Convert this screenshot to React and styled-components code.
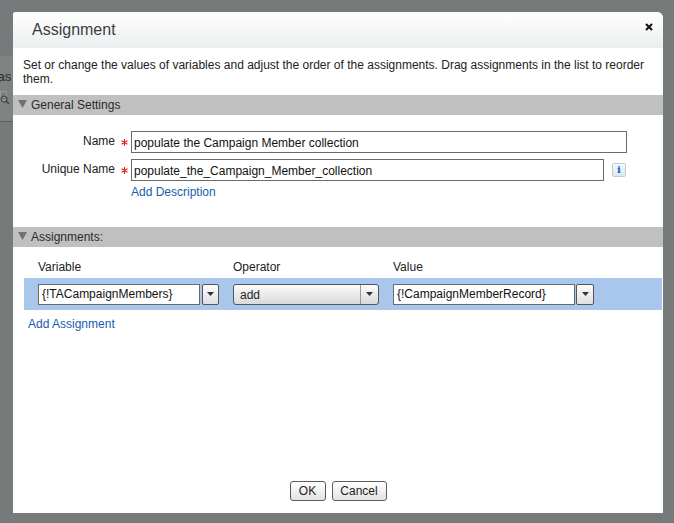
import React from 'react';
import styled, { createGlobalStyle } from 'styled-components';

const Global = createGlobalStyle`
  html, body { margin: 0; padding: 0; background: #777a7a; }
  body { font-family: "Liberation Sans", Arial, sans-serif; font-size: 12px; color: #222; }
`;
const Backdrop = styled.div`
  position: relative; width: 674px; height: 523px; box-sizing: border-box;
  padding: 12px 11px 10px 13px; overflow: hidden; background: #777a7a;
`;
const BehindPanel = styled.div`
  position: absolute; left: 0; top: 56px; width: 13px; height: 66px; box-sizing: border-box;
  border-bottom: 1px solid #5f6262; background: #7f8282; color: #2c2e2e; font-size: 13px;
  overflow: hidden;
`;
const BehindText = styled.div` position: absolute; left: -9px; top: 13px; `;
const BehindIcon = styled.svg` position: absolute; left: 0; top: 35px; `;
const Modal = styled.div`
  position: relative; display: flex; flex-direction: column; height: 501px; background: #fff;
  border-radius: 3px 6px 0 0; overflow: hidden;
`;
const Header = styled.div`
  display: flex; align-items: center; justify-content: space-between; height: 36px; box-sizing: border-box;
  padding: 0 10px 0 19px; background: linear-gradient(#fff, #ebeeef); flex: none;
`;
const Title = styled.div` font-size: 16px; color: #3c3d3e; `;
const Close = styled.svg` margin-top: -7px; `;
const Intro = styled.p`
  margin: 0; padding: 10px 10px 0 10px; height: 47px; box-sizing: border-box;
  font-size: 12px; line-height: 14px; color: #222;
`;
const SectionBar = styled.div`
  display: flex; align-items: center; gap: 4px; height: 20px; flex: none; background: #c0c0c0;
  padding-left: 5px; font-size: 12px; color: #2b2b2b;
`;
const Tri = styled.svg` margin-top: -2px; `;
const Settings = styled.div`
  display: grid; grid-template-columns: 102px 16px auto; grid-auto-rows: min-content; height: 112px;
  box-sizing: border-box; padding-top: 16px; row-gap: 6px; flex: none;
`;
const Label = styled.div` text-align: right; font-size: 12px; line-height: 20px; color: #222; `;
const Star = styled.svg` display: block; margin: 8px 0 0 6px; `;
const FieldRow = styled.div` display: flex; align-items: center; `;
const TextBox = styled.div`
  box-sizing: border-box; width: ${p => p.$w}px; height: 21px; border: 1px solid #6a6a6a;
  background: #fff; font-size: 12px; line-height: 19px; padding-left: 3px; color: #111; white-space: nowrap;
`;
const FieldBox = styled(TextBox)`
  height: 22px; line-height: 20px; padding: 1px 0 0 2px;
`;
const InfoBtn = styled.div`
  box-sizing: border-box; width: 14px; height: 14px; margin-left: 8px; border: 1px solid #c3cdd4; border-radius: 2px;
  background: linear-gradient(#f5f9fc, #dfe8f0); color: #0a63c4; font: bold 10px/12px "DejaVu Serif", serif; text-align: center;
`;
const DescLink = styled.a`
  grid-column: 3; color: #1a5dab; font-size: 12px; line-height: 14px; margin-top: -2px; text-decoration: none;
`;
const AssignArea = styled.div` display: flex; flex-direction: column; flex: 1; padding: 13px 1px 0 11px; `;
const ColHead = styled.div`
  display: grid; grid-template-columns: 195px 160px auto; padding-left: 14px; font-size: 12px; line-height: 15px; color: #222;
  margin-bottom: 3px;
`;
const Row = styled.div`
  display: grid; grid-template-columns: 195px 160px auto; align-items: center; height: 32px; padding-left: 14px;
  background: #a9c6ed; box-sizing: border-box;
`;
const Combo = styled.div` display: flex; align-items: center; gap: ${p => p.$gap}px; `;
const DropBtn = styled.div`
  display: flex; align-items: center; justify-content: center; box-sizing: border-box; width: ${p => p.$w}px; height: 21px;
  border: 1px solid #555; border-radius: 2px; background: linear-gradient(#fbfbfb, #dfe0e2);
`;
const Caret = styled.svg` display: block; `;
const SelectBox = styled.div`
  display: flex; width: 146px; height: 21px; box-sizing: border-box; border: 1px solid #555; border-radius: 3px;
  background: linear-gradient(#fbfbfb, #d9dadc); font-size: 12px; line-height: 20px; color: #222;
`;
const SelectValue = styled.div` flex: 1; padding-left: 6px; border-right: 1px solid #9a9a9a; `;
const SelectArrow = styled.div` display: flex; align-items: center; justify-content: center; width: 17px; `;
const AddLink = styled.a`
  color: #1a5dab; font-size: 12px; line-height: 15px; margin-top: 7px; padding-left: 4px; text-decoration: none;
`;
const Footer = styled.div`
  display: flex; justify-content: center; gap: 6px; padding: 0 10px 12px 0; margin-top: auto;
`;
const Btn = styled.button`
  box-sizing: border-box; height: 20px; width: ${p => p.$w}px; padding: 0; border: 1px solid #5c5c5c; border-radius: 3px;
  background: linear-gradient(#fff, #e2e3e5); font-family: "Liberation Sans", Arial, sans-serif; font-size: 12px; color: #222;
`;

const CaretIcon = () => (
  <Caret width="9" height="5" viewBox="0 0 9 5"><path d="M1 0h7L4.500 4z" fill="#333" /></Caret>
);
const StarIcon = () => (
  <Star width="7" height="7" viewBox="0 0 7 7"><path d="M3.500 0v7M0.500 1.700l6 3.600M6.500 1.700l-6 3.600" stroke="#e0201c" strokeWidth="1.100" /></Star>
);
const TriIcon = () => (
  <Tri width="9" height="8" viewBox="0 0 9 8"><path d="M0 0h9L4.500 8z" fill="#6d7373" /></Tri>
);

export default function App() {
  return (
    <>
      <Global />
      <Backdrop>
        <BehindPanel>
          <BehindText>Tas</BehindText>
          <BehindIcon width="13" height="16" viewBox="0 0 13 16" fill="none">
            <rect x="0.500" y="0.500" width="6" height="9" stroke="#9a9c9c" />
            <circle cx="4" cy="8" r="3" stroke="#444" strokeWidth="1.200" />
            <path d="M6 10l3 3" stroke="#444" strokeWidth="1.500" />
          </BehindIcon>
        </BehindPanel>
        <Modal>
          <Header>
            <Title>Assignment</Title>
            <Close width="8" height="8" viewBox="0 0 8 8"><path d="M1 1l6 6M7 1L1 7" stroke="#111" strokeWidth="2" /></Close>
          </Header>
          <Intro>Set or change the values of variables and adjust the order of the assignments. Drag assignments in the list to reorder them.</Intro>
          <SectionBar><TriIcon />General Settings</SectionBar>
          <Settings>
            <Label>Name</Label>
            <StarIcon />
            <FieldRow><FieldBox $w={496}>populate the Campaign Member collection</FieldBox></FieldRow>
            <Label>Unique Name</Label>
            <StarIcon />
            <FieldRow>
              <FieldBox $w={473}>populate_the_Campaign_Member_collection</FieldBox>
              <InfoBtn>i</InfoBtn>
            </FieldRow>
            <DescLink>Add Description</DescLink>
          </Settings>
          <SectionBar><TriIcon />Assignments:</SectionBar>
          <AssignArea>
            <ColHead><span>Variable</span><span>Operator</span><span>Value</span></ColHead>
            <Row>
              <Combo $gap={2}>
                <TextBox $w={162}>{'{!TACampaignMembers}'}</TextBox>
                <DropBtn $w={17}><CaretIcon /></DropBtn>
              </Combo>
              <SelectBox>
                <SelectValue>add</SelectValue>
                <SelectArrow><CaretIcon /></SelectArrow>
              </SelectBox>
              <Combo $gap={1}>
                <TextBox $w={182}>{'{!CampaignMemberRecord}'}</TextBox>
                <DropBtn $w={18}><CaretIcon /></DropBtn>
              </Combo>
            </Row>
            <AddLink>Add Assignment</AddLink>
            <Footer>
              <Btn $w={36}>OK</Btn>
              <Btn $w={55}>Cancel</Btn>
            </Footer>
          </AssignArea>
        </Modal>
      </Backdrop>
    </>
  );
}
